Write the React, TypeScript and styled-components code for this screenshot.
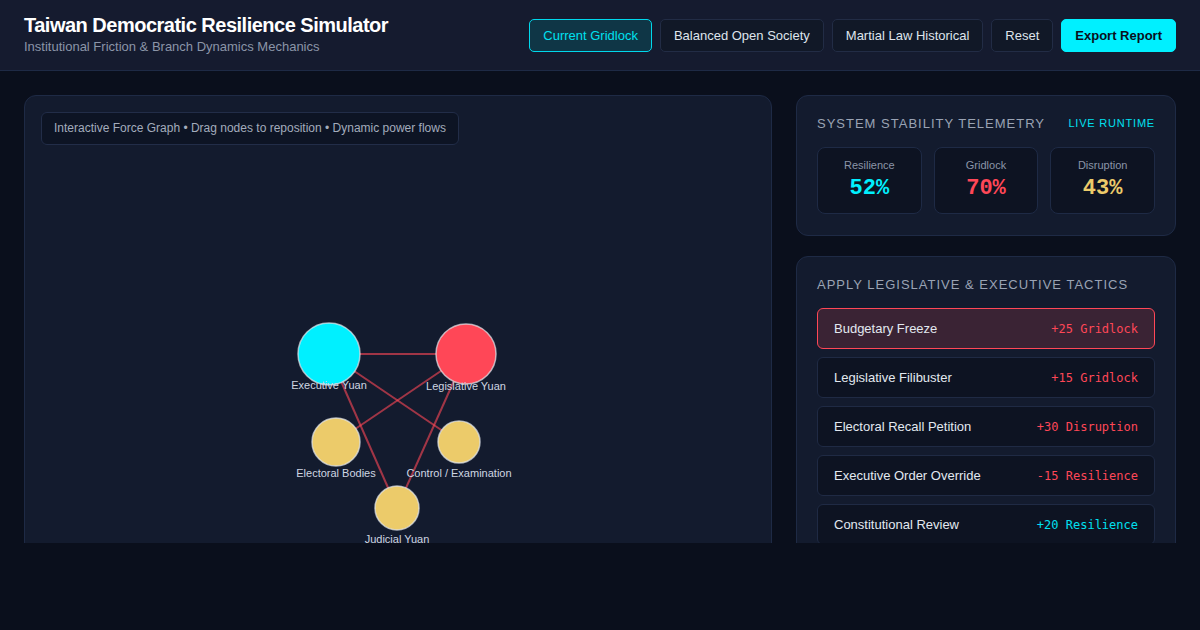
import React from "react";
import styled, { createGlobalStyle } from "styled-components";

const Global = createGlobalStyle`
  html, body { margin: 0; padding: 0; background: #0a0f1c; }
  body { font-family: "Liberation Sans", Arial, sans-serif; color: #e2e8f0; }
  * { box-sizing: border-box; }
`;

const Page = styled.div`
  width: 1200px;
  height: 630px;
  background: #0a0f1c;
  overflow: hidden;
`;

const Header = styled.header`
  height: 71px;
  background: #151b2f;
  border-bottom: 1px solid #1e2a45;
  display: flex;
  align-items: center;
  justify-content: space-between;
  padding: 0 24px;
`;

const TitleBlock = styled.div`
  display: flex;
  flex-direction: column;
  gap: 2px;
  margin-top: -2px;
`;

const Title = styled.h1`
  margin: 0;
  font-size: 20px;
  font-weight: 700;
  color: #ffffff;
  letter-spacing: -0.5px;
  line-height: 24px;
`;

const Subtitle = styled.div`
  font-size: 13px;
  color: #8b95a8;
  line-height: 16px;
`;

const Toolbar = styled.div`
  display: flex;
  gap: 8px;
  align-items: center;
`;

const Btn = styled.button<{ $variant?: "active" | "primary" | "default" }>`
  height: 33px;
  padding: 0 13px;
  border-radius: 5px;
  font-family: "Liberation Sans", Arial, sans-serif;
  font-size: 13px;
  cursor: pointer;
  border: 1px solid
    ${(p) => (p.$variant === "active" ? "#00d8ec" : p.$variant === "primary" ? "#00f0ff" : "#222c45")};
  background: ${(p) => (p.$variant === "active" ? "#0f3646" : p.$variant === "primary" ? "#00f0ff" : "#111827")};
  color: ${(p) => (p.$variant === "active" ? "#00e0f0" : p.$variant === "primary" ? "#0a0f1c" : "#dfe4ec")};
  font-weight: ${(p) => (p.$variant === "primary" ? 700 : 400)};
`;

const Main = styled.main`
  height: 472px;
  overflow: hidden;
  padding: 24px 24px 0 24px;
  display: grid;
  grid-template-columns: 1fr 380px;
  gap: 24px;
  align-items: start;
`;

const GraphPanel = styled.section`
  position: relative;
  height: 540px;
  background: #131b2e;
  border: 1px solid #1e2a45;
  border-radius: 12px;
  overflow: hidden;
`;

const InfoBadge = styled.div`
  position: absolute;
  top: 16px;
  left: 16px;
  padding: 8px 12px;
  background: #0d1424;
  border: 1px solid #222d48;
  border-radius: 6px;
  font-size: 12px;
  color: #a3acbc;
  line-height: 15px;
`;

const GraphSvg = styled.svg`
  display: block;
  width: 100%;
  height: 100%;
`;

const NodeLabel = styled.text`
  font-family: "Liberation Sans", Arial, sans-serif;
  font-size: 11px;
  fill: #cfd6e2;
`;

const Side = styled.aside`
  display: flex;
  flex-direction: column;
  gap: 20px;
`;

const Card = styled.section`
  background: #131b2e;
  border: 1px solid #1e2a45;
  border-radius: 12px;
  padding: 19px 20px 21px 20px;
`;

const CardHead = styled.div`
  display: flex;
  justify-content: space-between;
  align-items: center;
  margin-bottom: 16px;
  height: 16px;
`;

const CardTitle = styled.h2`
  margin: 0;
  font-size: 13px;
  font-weight: 400;
  letter-spacing: 1px;
  text-transform: uppercase;
  color: #9aa3b4;
`;

const LiveTag = styled.span`
  font-size: 11px;
  letter-spacing: 0.8px;
  color: #00e0f0;
  text-transform: uppercase;
`;

const Stats = styled.div`
  display: grid;
  grid-template-columns: repeat(3, 1fr);
  gap: 12px;
`;

const Stat = styled.div`
  height: 67px;
  background: #0d1322;
  border: 1px solid #1e2a45;
  border-radius: 8px;
  display: flex;
  flex-direction: column;
  align-items: center;
  justify-content: center;
  gap: 5px;
`;

const StatLabel = styled.div`
  font-size: 11px;
  color: #8b95a8;
`;

const StatValue = styled.div<{ $color: string }>`
  font-family: "Liberation Mono", "DejaVu Sans Mono", monospace;
  font-weight: 700;
  font-size: 22px;
  line-height: 26px;
  color: ${(p) => p.$color};
`;

const TacticList = styled.div`
  display: flex;
  flex-direction: column;
  gap: 8px;
`;

const Tactic = styled.button<{ $active?: boolean }>`
  height: 41px;
  width: 100%;
  display: flex;
  align-items: center;
  justify-content: space-between;
  padding: 0 16px;
  border-radius: 6px;
  cursor: pointer;
  border: 1px solid ${(p) => (p.$active ? "#ff4757" : "#1f2a44")};
  background: ${(p) => (p.$active ? "#3a2334" : "#0d1322")};
  font-family: "Liberation Sans", Arial, sans-serif;
`;

const TacticName = styled.span`
  font-size: 13px;
  color: #e2e8f0;
`;

const TacticEffect = styled.span<{ $good?: boolean }>`
  font-family: "DejaVu Sans Mono", "Liberation Mono", monospace;
  font-size: 12px;
  color: ${(p) => (p.$good ? "#00e0f0" : "#ff4757")};
`;

type Node = { id: string; label: string; x: number; y: number; r: number; color: string; ly: number };

const OX = 24;
const OY = 95;
const nodes: Node[] = [
  { id: "exec", label: "Executive Yuan", x: 329, y: 354, r: 31, color: "#00f0ff", ly: 389 },
  { id: "leg", label: "Legislative Yuan", x: 466, y: 354, r: 30, color: "#ff4757", ly: 390 },
  { id: "elec", label: "Electoral Bodies", x: 336, y: 442, r: 24, color: "#eccb6a", ly: 477 },
  { id: "ctrl", label: "Control / Examination", x: 459, y: 442, r: 21, color: "#eccb6a", ly: 477 },
  { id: "jud", label: "Judicial Yuan", x: 397, y: 508, r: 22, color: "#eccb6a", ly: 543 },
];

const edges: [string, string][] = [
  ["exec", "leg"],
  ["exec", "ctrl"],
  ["exec", "jud"],
  ["leg", "elec"],
  ["leg", "jud"],
];

const byId = (id: string) => nodes.find((n) => n.id === id)!;

const tactics = [
  { name: "Budgetary Freeze", effect: "+25 Gridlock", active: true },
  { name: "Legislative Filibuster", effect: "+15 Gridlock" },
  { name: "Electoral Recall Petition", effect: "+30 Disruption" },
  { name: "Executive Order Override", effect: "-15 Resilience" },
  { name: "Constitutional Review", effect: "+20 Resilience", good: true },
];

export default function App() {
  return (
    <Page>
      <Global />
      <Header>
        <TitleBlock>
          <Title>Taiwan Democratic Resilience Simulator</Title>
          <Subtitle>Institutional Friction &amp; Branch Dynamics Mechanics</Subtitle>
        </TitleBlock>
        <Toolbar>
          <Btn $variant="active">Current Gridlock</Btn>
          <Btn>Balanced Open Society</Btn>
          <Btn>Martial Law Historical</Btn>
          <Btn>Reset</Btn>
          <Btn $variant="primary">Export Report</Btn>
        </Toolbar>
      </Header>
      <Main>
        <GraphPanel>
          <GraphSvg>
            {edges.map(([a, b]) => {
              const na = byId(a);
              const nb = byId(b);
              return (
                <line
                  key={a + b}
                  x1={na.x - OX - 1}
                  y1={na.y - OY - 1}
                  x2={nb.x - OX - 1}
                  y2={nb.y - OY - 1}
                  stroke="#ff4757"
                  strokeOpacity={0.6}
                  strokeWidth={2}
                />
              );
            })}
            {nodes.map((n) => (
              <g key={n.id}>
                <circle
                  cx={n.x - OX - 1}
                  cy={n.y - OY - 1}
                  r={n.r}
                  fill={n.color}
                  stroke="#e6e9ef"
                  strokeOpacity={0.7}
                  strokeWidth={1.5}
                />
                <NodeLabel x={n.x - OX - 1} y={n.ly - OY - 1} textAnchor="middle">
                  {n.label}
                </NodeLabel>
              </g>
            ))}
          </GraphSvg>
          <InfoBadge>Interactive Force Graph • Drag nodes to reposition • Dynamic power flows</InfoBadge>
        </GraphPanel>
        <Side>
          <Card>
            <CardHead>
              <CardTitle>System Stability Telemetry</CardTitle>
              <LiveTag>Live Runtime</LiveTag>
            </CardHead>
            <Stats>
              <Stat>
                <StatLabel>Resilience</StatLabel>
                <StatValue $color="#00f0ff">52%</StatValue>
              </Stat>
              <Stat>
                <StatLabel>Gridlock</StatLabel>
                <StatValue $color="#ff4757">70%</StatValue>
              </Stat>
              <Stat>
                <StatLabel>Disruption</StatLabel>
                <StatValue $color="#eccb6a">43%</StatValue>
              </Stat>
            </Stats>
          </Card>
          <Card>
            <CardHead>
              <CardTitle>Apply Legislative &amp; Executive Tactics</CardTitle>
            </CardHead>
            <TacticList>
              {tactics.map((t) => (
                <Tactic key={t.name} $active={t.active}>
                  <TacticName>{t.name}</TacticName>
                  <TacticEffect $good={t.good}>{t.effect}</TacticEffect>
                </Tactic>
              ))}
            </TacticList>
          </Card>
        </Side>
      </Main>
    </Page>
  );
}
